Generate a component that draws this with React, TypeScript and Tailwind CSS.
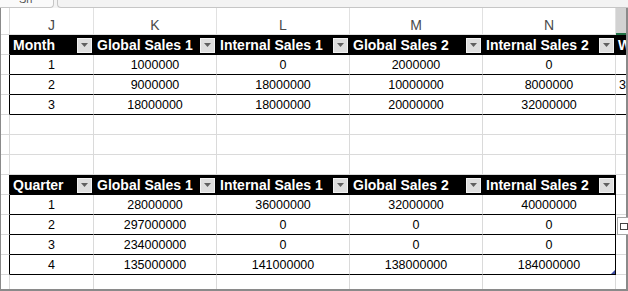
import React from "react";

const COLS = ["w-[84px]", "w-[123px]", "w-[133px]", "w-[133px]", "w-[133px]"];
const LETTERS = ["J", "K", "L", "M", "N"];

const table1 = {
  head: ["Month", "Global Sales 1", "Internal Sales 1", "Global Sales 2", "Internal Sales 2"],
  rows: [
    ["1", "1000000", "0", "2000000", "0"],
    ["2", "9000000", "18000000", "10000000", "8000000"],
    ["3", "18000000", "18000000", "20000000", "32000000"],
  ],
  extra: ["", "3", ""],
};

const table2 = {
  head: ["Quarter", "Global Sales 1", "Internal Sales 1", "Global Sales 2", "Internal Sales 2"],
  rows: [
    ["1", "28000000", "36000000", "32000000", "40000000"],
    ["2", "297000000", "0", "0", "0"],
    ["3", "234000000", "0", "0", "0"],
    ["4", "135000000", "141000000", "138000000", "184000000"],
  ],
};

const FilterButton = () => (
  <div className="mr-[2px] flex h-[15px] w-[15px] shrink-0 items-center justify-center border border-[#f2f2f2] bg-[#dedede]">
    <svg width="7" height="4" viewBox="0 0 7 4">
      <path d="M0 0h7L3.5 4z" fill="#5f5f5f" />
    </svg>
  </div>
);

const RowHead = ({ black }: { black?: boolean }) => (
  <div className={`w-[9px] shrink-0 border-r ${black ? "border-black" : "border-[#dadada]"} border-b border-b-[#dadada]`} />
);

const BlankRow = ({ h = "h-[20px]" }: { h?: string }) => (
  <div className={`flex ${h} shrink-0`}>
    <RowHead />
    {COLS.map((w, i) => (
      <div key={i} className={`${w} shrink-0 border-r border-b border-[#dadada]`} />
    ))}
    <div className="min-w-0 flex-1 border-b border-[#dadada]" />
  </div>
);

const HeaderRow = ({ labels, more }: { labels: string[]; more?: boolean }) => (
  <div className="flex h-[20px] shrink-0">
    <RowHead black />
    {labels.map((t, i) => (
      <div key={i} className={`${COLS[i]} flex shrink-0 items-center justify-between bg-black pl-[3px]`}>
        <span className="whitespace-nowrap text-[14px] font-bold leading-none text-white">{t}</span>
        <FilterButton />
      </div>
    ))}
    {more ? (
      <div className="flex min-w-0 flex-1 items-center overflow-hidden bg-black pl-[2px]">
        <span className="text-[14px] font-bold leading-none text-white">W</span>
      </div>
    ) : (
      <div className="min-w-0 flex-1 border-b border-[#dadada]" />
    )}
  </div>
);

const DataRow = ({
  cells,
  extra,
  closed,
  last,
}: {
  cells: string[];
  extra?: string;
  closed?: boolean;
  last?: boolean;
}) => (
  <div className="flex h-[20px] shrink-0">
    <RowHead black />
    {cells.map((t, i) => (
      <div
        key={i}
        className={`${COLS[i]} relative flex shrink-0 items-center justify-center border-b border-b-black border-r ${
          closed && i === 4 ? "border-r-black" : "border-r-[#dadada]"
        } pt-[1px] text-[12.5px] text-black`}
      >
        {t}
        {last && i === 4 && (
          <svg className="absolute bottom-0 right-0" width="4" height="4" viewBox="0 0 4 4">
            <path d="M4 0v4H0z" fill="#3b4ba3" />
          </svg>
        )}
      </div>
    ))}
    {closed ? (
      <div className="min-w-0 flex-1 border-b border-[#dadada]" />
    ) : (
      <div className="flex min-w-0 flex-1 items-center overflow-hidden border-b border-black pl-[3px] pt-[1px] text-[12.5px] text-black">
        {extra}
      </div>
    )}
  </div>
);

export default function App() {
  return (
    <div className="relative flex h-[291px] w-[628px] flex-col overflow-hidden bg-white font-['Liberation_Sans',Arial,sans-serif]">
      {/* sheet tab strip */}
      <div className="flex h-[8px] shrink-0 bg-[#f3f3f3]">
        <div className="relative w-[54px] shrink-0 rounded-br-[4px] border-r border-b border-[#c6c6c6] bg-[#fafafa]">
          <span className="absolute -top-[9px] left-[19px] text-[11px] text-[#555]">Sh</span>
        </div>
        <div className="w-[3px] shrink-0" />
        <div className="flex-1 rounded-bl-[4px] border-b border-l border-[#c6c6c6]" />
      </div>

      <div className="flex min-h-0 flex-1 flex-col overflow-hidden border-b-2 border-l border-r-2 border-[#8a8a8a]">
        {/* column letters */}
        <div className="flex h-[27px] shrink-0">
          <div className="w-[9px] shrink-0 border-r border-b border-[#dadada]" />
          {COLS.map((w, i) => (
            <div
              key={i}
              className={`${w} shrink-0 border-r border-b border-[#e1e1e1] pt-[10px] text-center text-[14px] leading-none text-[#4a4a4a]`}
            >
              {LETTERS[i]}
            </div>
          ))}
          <div className="min-w-0 flex-1 border-b-2 border-[#217346] bg-[#d2d2d2]" />
        </div>

        <HeaderRow labels={table1.head} more />
        {table1.rows.map((r, i) => (
          <DataRow key={i} cells={r} extra={table1.extra[i]} />
        ))}

        <BlankRow />
        <BlankRow />
        <BlankRow />

        <HeaderRow labels={table2.head} />
        {table2.rows.map((r, i) => (
          <DataRow key={i} cells={r} closed last={i === table2.rows.length - 1} />
        ))}

        <BlankRow h="h-[20px]" />
      </div>

      {/* quick analysis button */}
      <div className="absolute left-[617px] top-[217px] h-[18px] w-[12px] border border-[#a6a6a6] bg-white">
        <div className="absolute left-[2px] top-[5px] h-[7px] w-[8px] border border-[#444]" />
      </div>
    </div>
  );
}
